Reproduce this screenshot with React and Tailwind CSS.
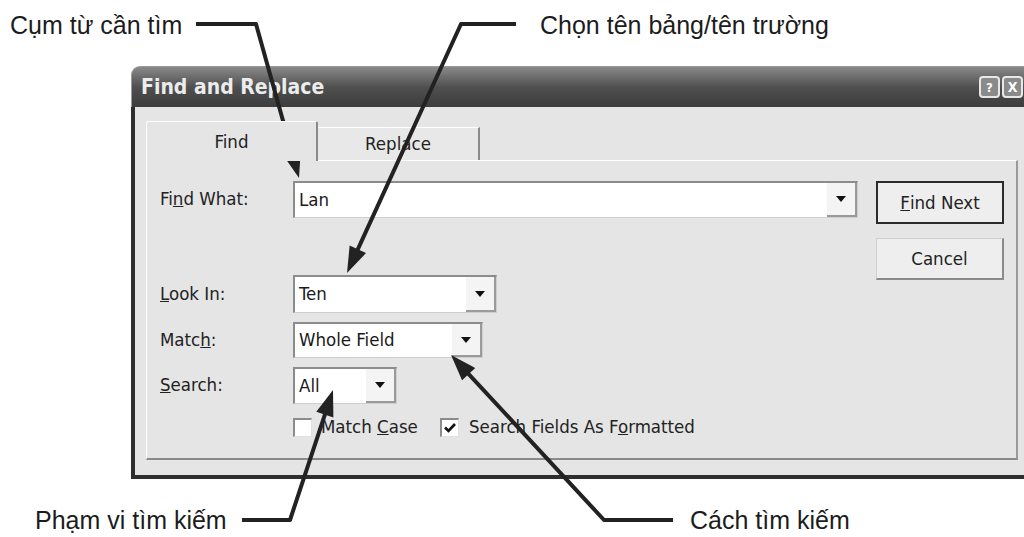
import React from 'react';

const Combo = ({ value, width }) => (
  <div
    className={`${width} h-full flex items-center bg-white border-t-2 border-l-2 border-[#8c8c8c] border-b border-r border-b-[#cfcfcf] border-r-[#cfcfcf]`}
  >
    <span className="flex-1 pl-[4px] text-[18.5px] text-[#1a1a1a] leading-none">{value}</span>
    <div className="w-[30px] h-full flex items-center justify-center bg-[#f4f4f4] border-r-2 border-b-2 border-[#9a9a9a]">
      <div className="w-0 h-0 border-l-[5px] border-r-[5px] border-t-[6px] border-l-transparent border-r-transparent border-t-[#111]" />
    </div>
  </div>
);

const Label = ({ children }) => (
  <div className="w-[133px] text-[18.5px] text-[#222] leading-none">{children}</div>
);

const Check = ({ checked }) => (
  <div className="w-[19px] h-[19px] bg-white border-t-2 border-l-2 border-[#8c8c8c] border-b border-r border-b-[#e0e0e0] border-r-[#e0e0e0] flex items-center justify-center">
    {checked && (
      <svg width="14" height="14" viewBox="0 0 14 14">
        <path d="M2 6.5 L5.5 10 L12 3" fill="none" stroke="#111" strokeWidth="2.6" />
      </svg>
    )}
  </div>
);

const Btn = ({ children, primary }) => (
  <div
    className={`w-[128px] flex items-center justify-center bg-[#eeeeee] text-[18.5px] text-[#222] ${
      primary
        ? 'h-[43px] border-2 border-[#2b2b2b]'
        : 'h-[42px] border border-[#cfcfcf] border-b-2 border-r-2 border-b-[#8a8a8a] border-r-[#8a8a8a]'
    }`}
  >
    {children}
  </div>
);

// leader line with a filled arrow head at the last point
const Leader = ({ points }) => {
  const [tx, ty] = points[points.length - 1];
  const [px, py] = points[points.length - 2];
  const len = Math.hypot(tx - px, ty - py);
  const ux = (tx - px) / len;
  const uy = (ty - py) / len;
  const L = 26;
  const W = 9;
  const bx = tx - ux * L;
  const by = ty - uy * L;
  const head = `${tx},${ty} ${bx - uy * W},${by + ux * W} ${bx + uy * W},${by - ux * W}`;
  const line = [...points.slice(0, -1), [bx + ux * 2, by + uy * 2]].map((p) => p.join(',')).join(' ');
  return (
    <g>
      <polyline points={line} fill="none" stroke="#222" strokeWidth="4" strokeLinejoin="round" />
      <polygon points={head} fill="#222" />
    </g>
  );
};

const App = () => {
  return (
    <div className="relative w-[1024px] h-[537px] overflow-hidden bg-white font-['Liberation_Sans',sans-serif]">
      {/* top captions */}
      <div className="h-[66px] flex items-start pt-[10px] text-[25px] text-[#1c1c1c] leading-[30px]">
        <span className="w-[540px] pl-[10px]">Cụm từ cần tìm</span>
        <span>Chọn tên bảng/tên trường</span>
      </div>

      {/* dialog */}
      <div className="ml-[131px] w-[920px] flex flex-col font-['DejaVu_Sans_Condensed','DejaVu_Sans',sans-serif]">
        <div className="h-[41px] flex items-center justify-between rounded-tl-[9px] bg-gradient-to-b from-[#8a8a8a] via-[#505050] to-[#3c3c3c] border-t border-l border-[#9a9a9a] pl-[9px] pr-[28px]">
          <span className="text-[21px] font-bold text-[#ececec] leading-none">Find and Replace</span>
          <div className="flex gap-[2px]">
            <div className="w-[21px] h-[22px] rounded-[4px] border-2 border-[#e8e8e8] bg-[#8a8a8a] flex items-center justify-center text-[13px] font-bold text-white leading-none">?</div>
            <div className="w-[21px] h-[22px] rounded-[4px] border-2 border-[#e8e8e8] bg-[#8a8a8a] flex items-center justify-center text-[14px] font-bold text-white leading-none">X</div>
          </div>
        </div>

        <div className="bg-[#e5e5e5] border-l-4 border-b-4 border-[#2e2e2e] pl-[11px] pt-[14px] pb-[15px]">
          {/* tabs */}
          <div className="h-[39px] flex items-end">
            <div className="w-[172px] h-[40px] mb-[-1px] flex items-center justify-center bg-[#e5e5e5] border-t border-l border-white border-r-2 border-r-[#8a8a8a] rounded-t-[2px] text-[18.5px] text-[#222] relative z-10">
              Find
            </div>
            <div className="w-[162px] h-[33px] flex items-center justify-center bg-[#e8e8e8] border-t border-white border-r-2 border-r-[#8a8a8a] text-[18.5px] text-[#222]">
              Replace
            </div>
          </div>

          {/* panel */}
          <div className="w-[872px] h-[300px] flex border-t border-l border-white border-r-2 border-b-2 border-r-[#9a9a9a] border-b-[#8a8a8a] pl-[13px] pr-[13px] pt-[20px]">
            <div className="flex-1 flex flex-col">
              <div className="h-[37px] flex items-center">
                <Label>Fi<u>n</u>d What:</Label>
                <Combo value="Lan" width="w-[565px]" />
              </div>
              <div className="h-[38px] mt-[57px] flex items-center">
                <Label><u>L</u>ook In:</Label>
                <Combo value="Ten" width="w-[204px]" />
              </div>
              <div className="h-[36px] mt-[9px] flex items-center">
                <Label>Matc<u>h</u>:</Label>
                <Combo value="Whole Field" width="w-[190px]" />
              </div>
              <div className="h-[37px] mt-[9px] flex items-center">
                <Label><u>S</u>earch:</Label>
                <Combo value="All" width="w-[104px]" />
              </div>
              <div className="h-[22px] mt-[12px] flex items-center pl-[133px] text-[18.5px] text-[#222] leading-none">
                <Check />
                <span className="ml-[9px] w-[119px]">Match <u>C</u>ase</span>
                <Check checked />
                <span className="ml-[10px]">Search Fields As F<u>o</u>rmatted</span>
              </div>
            </div>
            <div className="w-[128px] ml-[18px] flex flex-col gap-[14px]">
              <Btn primary><u>F</u>ind Next</Btn>
              <Btn>Cancel</Btn>
            </div>
          </div>
        </div>
      </div>

      {/* bottom captions */}
      <div className="h-[58px] flex items-start pt-[26px] text-[25px] text-[#1c1c1c] leading-[30px]">
        <span className="w-[690px] pl-[35px]">Phạm vi tìm kiếm</span>
        <span>Cách tìm kiếm</span>
      </div>

      {/* callout leaders */}
      <svg className="absolute inset-0 pointer-events-none" width="1024" height="537" viewBox="0 0 1024 537">
        <Leader points={[[196, 24], [256, 24], [299, 178]]} />
        <Leader points={[[516, 24], [461, 24], [347, 273]]} />
        <Leader points={[[242, 520], [290, 520], [333, 390]]} />
        <Leader points={[[673, 520], [604, 520], [451, 355]]} />
      </svg>
    </div>
  );
};

export default App;
